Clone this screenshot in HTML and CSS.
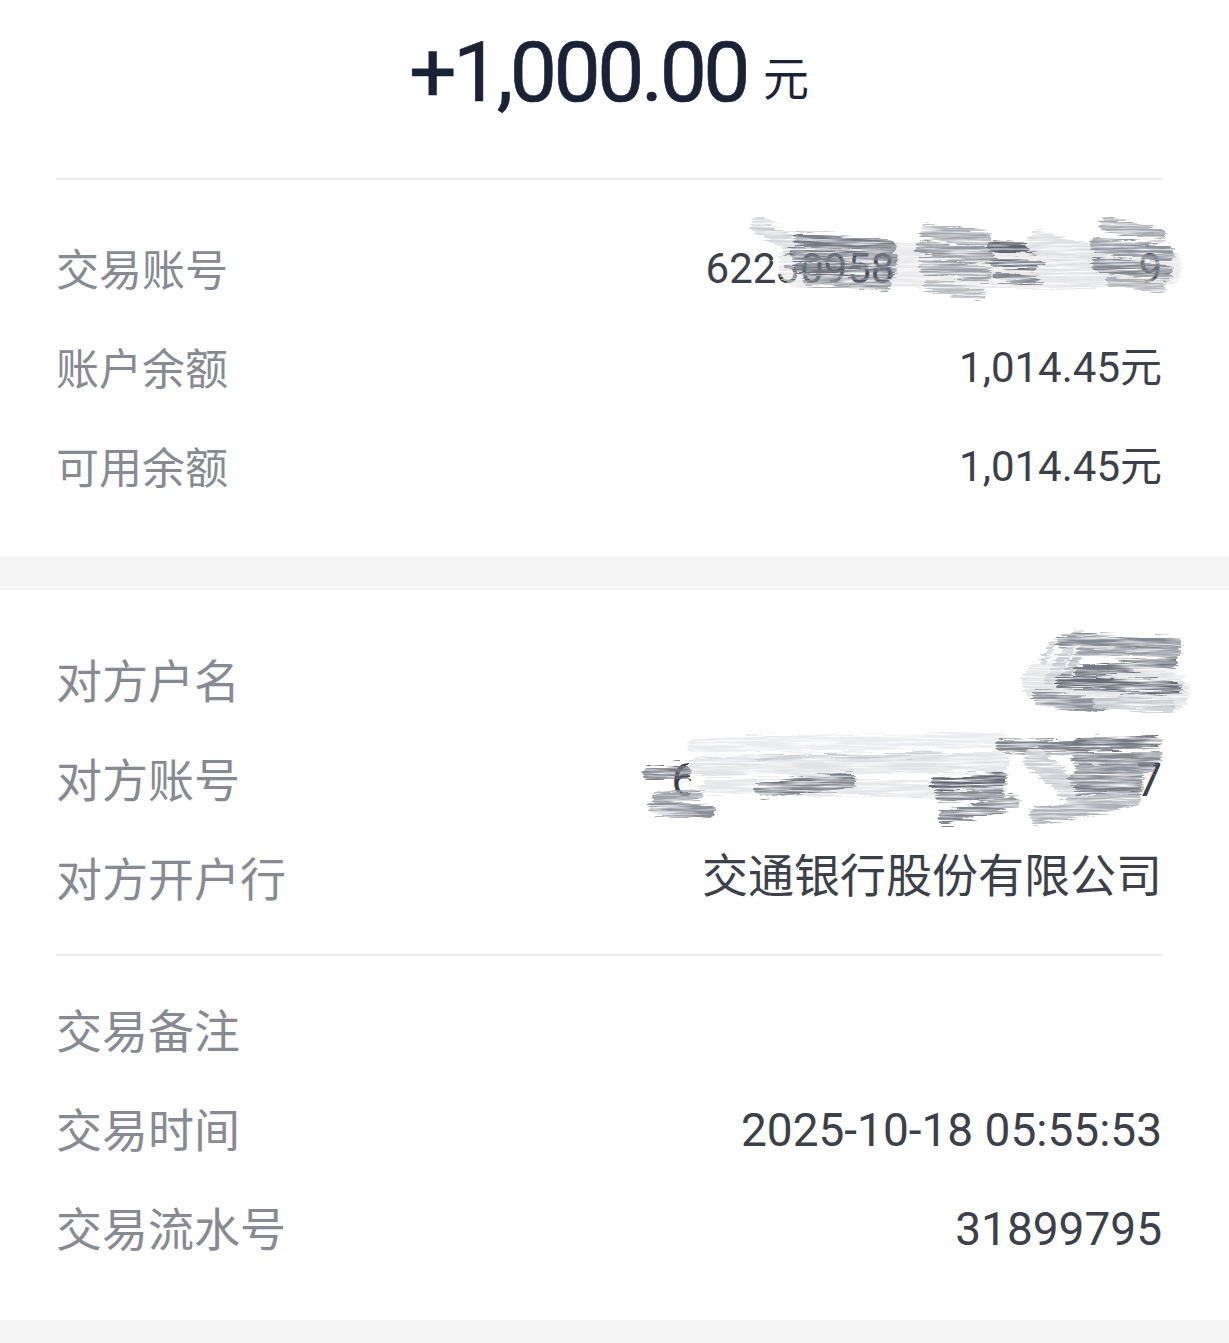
FILE: index.html
```html
<!DOCTYPE html>
<html lang="zh-CN">
<head>
<meta charset="utf-8">
<title>交易详情</title>
<link rel="stylesheet" href="styles.css">
</head>
<body>
<svg class="defs" width="0" height="0" aria-hidden="true">
  <defs>
    <filter id="brush" filterUnits="userSpaceOnUse" x="-40" y="-40" width="640" height="200">
      <feTurbulence type="fractalNoise" baseFrequency="0.02 0.5" numOctaves="3" seed="4" result="noise"/>
      <feDisplacementMap in="SourceGraphic" in2="noise" scale="12" xChannelSelector="R" yChannelSelector="G" result="disp"/>
      <feColorMatrix in="noise" type="matrix" values="0 0 0 0 0  0 0 0 0 0  0 0 0 0 0  2.2 0 0 0 -0.35" result="mask"/>
      <feComposite in="disp" in2="mask" operator="in"/>
    </filter>
    <filter id="smear" filterUnits="userSpaceOnUse" x="-40" y="-40" width="640" height="200">
      <feTurbulence type="fractalNoise" baseFrequency="0.05 0.3" numOctaves="2" seed="9" result="noise"/>
      <feDisplacementMap in="SourceGraphic" in2="noise" scale="10" xChannelSelector="R" yChannelSelector="G"/>
    </filter>
  </defs>
</svg>

<main class="page">
  <section class="summary">
    <header class="amount-head">
      <span class="amount">+1,000.00</span><span class="unit">元</span>
    </header>
    <div class="divider"></div>
    <div class="rows sm first">
      <div class="row">
        <span class="label">交易账号</span>
        <span class="value">62230958<span class="hide-a"></span>9</span>
        <svg class="scribble s1" width="440" height="95" viewBox="0 0 440 95" aria-hidden="true">
          <g filter="url(#smear)" stroke="#fff" fill="none">
            <path d="M34 44 L64 46" stroke-width="12"/>
          </g>
          <g filter="url(#brush)" fill="none" stroke-linecap="round">
            <path d="M60 50 L420 52" stroke="#e3e4e7" stroke-width="44" opacity="0.8"/>
            <path d="M18 10 L62 34" stroke="#c9ccd1" stroke-width="16"/>
            <path d="M30 20 L70 40" stroke="#d6d8dc" stroke-width="12"/>
            <path d="M60 24 L150 32" stroke="#767a84" stroke-width="13"/>
            <path d="M56 38 L152 45" stroke="#80848d" stroke-width="13"/>
            <path d="M60 52 L150 58" stroke="#71757f" stroke-width="12"/>
            <path d="M68 65 L146 70" stroke="#92969e" stroke-width="11"/>
            <path d="M186 16 L244 24" stroke="#a6a9b0" stroke-width="15"/>
            <path d="M183 33 L247 41" stroke="#92969e" stroke-width="15"/>
            <path d="M185 51 L245 59" stroke="#9ea1a8" stroke-width="15"/>
            <path d="M190 70 L240 80" stroke="#b6b9bf" stroke-width="12"/>
            <path d="M252 31 L300 35" stroke="#62666f" stroke-width="10"/>
            <path d="M255 47 L303 51" stroke="#70747d" stroke-width="10"/>
            <path d="M258 62 L300 66" stroke="#80848c" stroke-width="9"/>
            <path d="M300 28 L356 44" stroke="#dddee1" stroke-width="24"/>
            <path d="M304 58 L354 66" stroke="#e2e3e6" stroke-width="18"/>
            <path d="M366 9 L420 20" stroke="#a3a6ad" stroke-width="13"/>
            <path d="M358 30 L427 38" stroke="#8f939b" stroke-width="16"/>
            <path d="M360 50 L425 57" stroke="#858991" stroke-width="16"/>
            <path d="M372 67 L420 72" stroke="#adb0b6" stroke-width="10"/>
          </g>
        </svg>
      </div>
      <div class="row">
        <span class="label">账户余额</span>
        <span class="value">1,014.45元</span>
      </div>
      <div class="row">
        <span class="label">可用余额</span>
        <span class="value">1,014.45元</span>
      </div>
    </div>
  </section>

  <div class="band"></div>

  <section class="details">
    <div class="rows lg">
      <div class="row">
        <span class="label">对方户名</span>
        <span class="value"></span>
        <svg class="scribble s2" width="170" height="105" viewBox="0 0 170 105" aria-hidden="true">
          <g filter="url(#brush)" fill="none" stroke-linecap="round">
            <path d="M22 60 L150 70" stroke="#e2e3e6" stroke-width="40"/>
            <path d="M30 58 L58 12" stroke="#c7cad0" stroke-width="11"/>
            <path d="M42 60 L68 18" stroke="#b3b6bc" stroke-width="8"/>
            <path d="M24 40 L34 20" stroke="#d0d2d6" stroke-width="6"/>
            <path d="M42 18 L155 22" stroke="#858992" stroke-width="12"/>
            <path d="M62 30 L157 31" stroke="#979ba3" stroke-width="8"/>
            <path d="M60 49 L153 40" stroke="#757983" stroke-width="11"/>
            <path d="M43 60 L155 66" stroke="#666a74" stroke-width="14"/>
            <path d="M20 76 L80 84" stroke="#8f939c" stroke-width="16"/>
            <path d="M80 80 L150 84" stroke="#c4c7cc" stroke-width="12"/>
          </g>
        </svg>
      </div>
      <div class="row">
        <span class="label">对方账号</span>
        <span class="value">6<span class="hide-b"></span>7</span>
        <svg class="scribble s3" width="530" height="100" viewBox="0 0 530 100" aria-hidden="true">
          <g filter="url(#smear)" stroke="#fff" fill="none">
            <path d="M49 46 L495 46" stroke-width="48"/>
          </g>
          <g filter="url(#brush)" fill="none" stroke-linecap="round">
            <path d="M55 18 L360 12" stroke="#eaebee" stroke-width="16"/>
            <path d="M60 38 L360 34" stroke="#e0e2e5" stroke-width="20"/>
            <path d="M70 58 L360 62" stroke="#e5e6e9" stroke-width="16"/>
            <path d="M120 30 L300 26" stroke="#c8cbd0" stroke-width="5"/>
            <path d="M10 46 L44 44" stroke="#747882" stroke-width="14"/>
            <path d="M18 70 L58 66" stroke="#9ea2a9" stroke-width="10"/>
            <path d="M15 80 L70 84" stroke="#8c9099" stroke-width="14"/>
            <path d="M122 62 L208 52" stroke="#767a84" stroke-width="16"/>
            <path d="M150 58 L210 56" stroke="#868a92" stroke-width="10"/>
            <path d="M298 55 L360 52" stroke="#646872" stroke-width="14"/>
            <path d="M300 68 L360 66" stroke="#848890" stroke-width="10"/>
            <path d="M305 90 L372 74" stroke="#80848d" stroke-width="14"/>
            <path d="M363 17 L440 20" stroke="#80848d" stroke-width="14"/>
            <path d="M395 30 L440 70" stroke="#cbcdd2" stroke-width="22"/>
            <path d="M398 88 L492 70" stroke="#aeb1b7" stroke-width="18"/>
            <path d="M440 16 L515 14" stroke="#747882" stroke-width="12"/>
            <path d="M438 30 L516 30" stroke="#858991" stroke-width="12"/>
            <path d="M440 42 L510 40" stroke="#8f939b" stroke-width="10"/>
            <path d="M436 51 L498 50" stroke="#8b8f97" stroke-width="14"/>
            <path d="M440 62 L498 60" stroke="#747882" stroke-width="10"/>
          </g>
        </svg>
      </div>
      <div class="row">
        <span class="label">对方开户行</span>
        <span class="value cjk">交通银行股份有限公司</span>
      </div>
    </div>
    <div class="divider mid"></div>
    <div class="rows lg">
      <div class="row">
        <span class="label">交易备注</span>
        <span class="value"></span>
      </div>
      <div class="row">
        <span class="label">交易时间</span>
        <span class="value">2025-10-18 05:55:53</span>
      </div>
      <div class="row">
        <span class="label">交易流水号</span>
        <span class="value">31899795</span>
      </div>
    </div>
  </section>
</main>
</body>
</html>
```

FILE: styles.css
```css
html, body {
  margin: 0;
  padding: 0;
}

body {
  background: #f5f5f5;
  font-family: "Noto Sans CJK SC", "Noto Sans", sans-serif;
}

.defs {
  position: absolute;
  width: 0;
  height: 0;
  overflow: hidden;
}

.page {
  width: 1229px;
}

.summary {
  background: #ffffff;
  padding: 0 67px 41px 56px;
}

.amount-head {
  height: 115px;
  padding: 31px 0 0;
  margin-bottom: 63px;
  box-sizing: border-box;
  display: flex;
  justify-content: center;
  align-items: flex-end;
  color: #1b2236;
  white-space: nowrap;
}

.amount {
  font-family: Roboto, "Noto Sans", sans-serif;
  font-weight: 400;
  font-size: 84px;
  line-height: 84px;
  letter-spacing: -3.5px;
  -webkit-text-stroke: 0.6px #1b2236;
}

.unit {
  font-family: "Noto Sans CJK SC", sans-serif;
  font-size: 46px;
  line-height: 46px;
  margin-left: 16px;
  margin-bottom: 17px;
}

.divider {
  height: 2px;
  background: #ebebeb;
}

.divider.mid {
  margin: 26px 0 25px;
}

.rows.first {
  padding-top: 39px;
}

.row {
  position: relative;
  display: flex;
  justify-content: space-between;
  align-items: center;
  height: 99px;
}

.label {
  color: #878a93;
  line-height: 1;
  white-space: nowrap;
}

.value {
  color: #3c404b;
  font-family: Roboto, "Noto Sans CJK SC", sans-serif;
  line-height: 1;
  white-space: nowrap;
}

.sm .label {
  font-size: 43px;
  margin-bottom: 2px;
}

.sm .value {
  font-size: 42px;
}

.lg .label,
.lg .value {
  font-size: 46px;
}

.lg .label,
.lg .value.cjk {
  margin-bottom: 6px;
}

.hide-a {
  display: inline-block;
  width: 244px;
}

.hide-b {
  display: inline-block;
  width: 439px;
}

.band {
  height: 33px;
  background: #f5f5f5;
}

.details {
  background: #ffffff;
  padding: 41px 67px 42px 56px;
}

.scribble {
  position: absolute;
  overflow: visible;
  pointer-events: none;
}

.scribble.s1 {
  left: 684px;
  top: -4px;
}

.scribble.s2 {
  left: 964px;
  top: -9px;
}

.scribble.s3 {
  left: 584px;
  top: -2px;
}
```
